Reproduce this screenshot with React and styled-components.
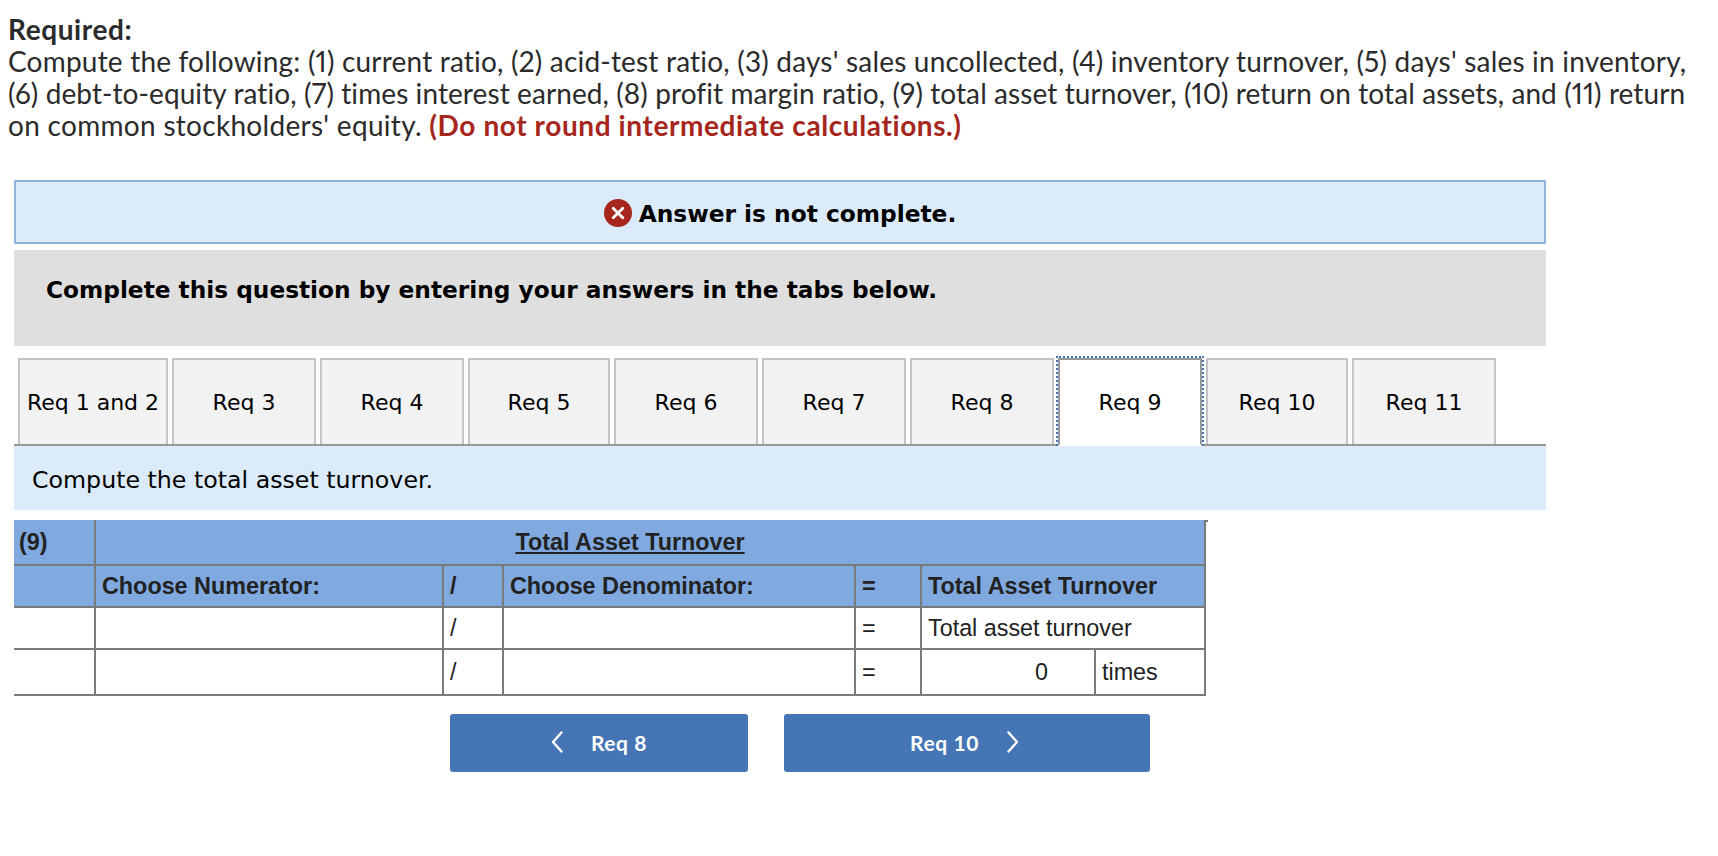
import React from 'react';
import styled, { createGlobalStyle } from 'styled-components';

const GlobalStyle = createGlobalStyle`
  html, body {
    margin: 0;
    padding: 0;
    background: #fff;
  }
`;

const Page = styled.div`
  width: 1718px;
  height: 856px;
  overflow: hidden;
  padding-top: 13px;
  box-sizing: border-box;
`;

const Question = styled.div`
  padding-left: 8px;
  font-family: 'Lato', sans-serif;
  font-size: 28px;
  line-height: 32px;
  font-variant-ligatures: none;
  font-variant-numeric: proportional-nums;
  color: #2b2b2b;
  white-space: nowrap;
`;

const Strong = styled.div`
  font-weight: 700;
  letter-spacing: 0.6px;
`;

const Line = styled.div`
  letter-spacing: ${p => p.$spacing}px;
`;

const Warning = styled.strong`
  font-weight: 700;
  letter-spacing: 0.6px;
  color: #a6261d;
`;

const Panel = styled.div`
  margin: 39px 0 0 14px;
  width: 1532px;
  font-family: 'DejaVu Sans', sans-serif;
  color: #000;
`;

const Alert = styled.div`
  height: 64px;
  box-sizing: border-box;
  padding-top: 2px;
  display: flex;
  align-items: center;
  justify-content: center;
  gap: 7px;
  background: #dcebf9;
  border: 2px solid #8fb3d9;
  font-size: 23.3px;
  font-weight: 700;
`;

const Instructions = styled.div`
  margin-top: 6px;
  height: 96px;
  box-sizing: border-box;
  padding: 26px 0 0 32px;
  background: #dfdfdf;
  font-size: 23.25px;
  font-weight: 700;
`;

const TabRow = styled.div`
  margin-top: 12px;
  height: 88px;
  box-sizing: border-box;
  display: flex;
  align-items: stretch;
  gap: 4px;
  padding-left: 4px;
  border-bottom: 2px solid #999;
`;

const Tab = styled.div`
  position: relative;
  width: ${p => p.$width}px;
  box-sizing: border-box;
  display: flex;
  align-items: center;
  justify-content: center;
  background: ${p => (p.$active ? '#fff' : '#f2f2f2')};
  border: 2px solid ${p => (p.$active ? '#999' : '#c4c4c4')};
  border-bottom: ${p => (p.$active ? '2px solid #fff' : 'none')};
  margin-bottom: ${p => (p.$active ? '-2px' : '0')};
  font-size: 22px;
  white-space: nowrap;

  ${p =>
    p.$active &&
    `
    &::before {
      content: '';
      position: absolute;
      top: -4px;
      left: -4px;
      right: -4px;
      bottom: -2px;
      border: 2px dotted #4575b4;
      border-bottom: none;
    }
  `}
`;

const Prompt = styled.div`
  height: 64px;
  box-sizing: border-box;
  padding: 4px 0 0 18px;
  display: flex;
  align-items: center;
  background: #dcebf9;
  font-size: 23.7px;
`;

const TableWrap = styled.div`
  position: relative;
  margin: 10px 0 0 14px;
  width: 1191px;

  &::after {
    content: '';
    position: absolute;
    top: 0;
    right: -3px;
    width: 4px;
    height: 2px;
    background: #7a7a7a;
  }
`;

const Sheet = styled.table`
  width: 1191px;
  table-layout: fixed;
  border-collapse: collapse;
  font-family: 'Liberation Sans', Arial, sans-serif;
  font-size: 23.35px;
  color: #222;
`;

const Cell = styled.td`
  height: ${p => p.$height || 42}px;
  box-sizing: border-box;
  padding: 0 ${p => p.$padRight ?? 0}px 0 ${p => p.$pad ?? 6}px;
  border: 2px solid #7a7a7a;
  border-top: ${p => (p.$noTop ? 'none' : '2px solid #7a7a7a')};
  background: ${p => (p.$head ? '#7fa9df' : '#fff')};
  font-weight: ${p => (p.$head ? 700 : 400)};
  text-align: ${p => p.$align || 'left'};
  white-space: nowrap;

  &:first-child {
    border-left: none;
  }
`;

const HeadTitle = styled.span`
  text-decoration: underline;
`;

const Nav = styled.div`
  display: flex;
  gap: 36px;
  margin: 18px 0 0 450px;
`;

const NavButton = styled.div`
  width: ${p => p.$width}px;
  height: 58px;
  box-sizing: border-box;
  padding: 0 ${p => p.$shift || 0}px 2px 0;
  display: flex;
  align-items: center;
  justify-content: center;
  gap: 28px;
  background: #4575b4;
  border-radius: 3px;
  color: #fff;
  font-family: 'Lato', sans-serif;
  font-size: 21px;
  font-weight: 700;
  letter-spacing: 0.6px;
`;

const TABS = [
  { label: 'Req 1 and 2', width: 150 },
  { label: 'Req 3', width: 144 },
  { label: 'Req 4', width: 144 },
  { label: 'Req 5', width: 142 },
  { label: 'Req 6', width: 144 },
  { label: 'Req 7', width: 144 },
  { label: 'Req 8', width: 144 },
  { label: 'Req 9', width: 144, active: true },
  { label: 'Req 10', width: 142 },
  { label: 'Req 11', width: 144 },
];

const ErrorIcon = () => (
  <svg width="28" height="28" viewBox="0 0 28 28" aria-hidden="true">
    <circle cx="14" cy="14" r="14" fill="#a6261d" />
    <path d="M9.2 9.2 18.8 18.8M18.8 9.2 9.2 18.8" stroke="#fff" strokeWidth="2.8" strokeLinecap="round" />
  </svg>
);

const Chevron = ({ left }) => (
  <svg width="12" height="22" viewBox="0 0 12 22" fill="none" aria-hidden="true">
    <path
      d={left ? 'M10.500 1.500 2 11l8.500 9.500' : 'M1.500 1.500 10 11l-8.500 9.500'}
      stroke="#fff"
      strokeWidth="2.4"
      strokeLinecap="round"
      strokeLinejoin="round"
    />
  </svg>
);

const App = () => (
  <Page>
    <GlobalStyle />
    <Question>
      <Strong>Required:</Strong>
      <Line $spacing={0.2}>
        Compute the following: (1) current ratio, (2) acid-test ratio, (3) days' sales uncollected, (4) inventory turnover, (5) days' sales in inventory,
      </Line>
      <Line $spacing={0.09}>
        (6) debt-to-equity ratio, (7) times interest earned, (8) profit margin ratio, (9) total asset turnover, (10) return on total assets, and (11) return
      </Line>
      <Line $spacing={0.3}>
        on common stockholders' equity. <Warning>(Do not round intermediate calculations.)</Warning>
      </Line>
    </Question>

    <Panel>
      <Alert>
        <ErrorIcon />
        Answer is not complete.
      </Alert>
      <Instructions>Complete this question by entering your answers in the tabs below.</Instructions>
      <TabRow>
        {TABS.map(tab => (
          <Tab key={tab.label} $width={tab.width} $active={tab.active}>
            {tab.label}
          </Tab>
        ))}
      </TabRow>
      <Prompt>Compute the total asset turnover.</Prompt>
    </Panel>

    <TableWrap>
      <Sheet>
        <colgroup>
          <col style={{ width: 81 }} />
          <col style={{ width: 348 }} />
          <col style={{ width: 60 }} />
          <col style={{ width: 352 }} />
          <col style={{ width: 66 }} />
          <col style={{ width: 174 }} />
          <col style={{ width: 110 }} />
        </colgroup>
        <tbody>
          <tr>
            <Cell $head $height={45} $noTop $pad={5}>(9)</Cell>
            <Cell $head $height={45} $noTop $pad={0} $padRight={40} $align="center" colSpan={6}>
              <HeadTitle>Total Asset Turnover</HeadTitle>
            </Cell>
          </tr>
          <tr>
            <Cell $head />
            <Cell $head>Choose Numerator:</Cell>
            <Cell $head>/</Cell>
            <Cell $head>Choose Denominator:</Cell>
            <Cell $head>=</Cell>
            <Cell $head colSpan={2}>Total Asset Turnover</Cell>
          </tr>
          <tr>
            <Cell />
            <Cell />
            <Cell>/</Cell>
            <Cell />
            <Cell>=</Cell>
            <Cell colSpan={2}>Total asset turnover</Cell>
          </tr>
          <tr>
            <Cell $height={46} />
            <Cell $height={46} />
            <Cell $height={46}>/</Cell>
            <Cell $height={46} />
            <Cell $height={46}>=</Cell>
            <Cell $height={46} $padRight={46} $align="right">0</Cell>
            <Cell $height={46}>times</Cell>
          </tr>
        </tbody>
      </Sheet>
    </TableWrap>

    <Nav>
      <NavButton $width={298}>
        <Chevron left />
        Req 8
      </NavButton>
      <NavButton $width={366} $shift={5}>
        Req 10
        <Chevron />
      </NavButton>
    </Nav>
  </Page>
);

export default App;
